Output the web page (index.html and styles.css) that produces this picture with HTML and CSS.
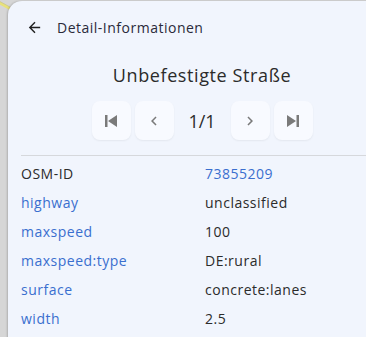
FILE: index.html
```html
<!DOCTYPE html>
<html lang="de">
<head>
<meta charset="utf-8">
<link rel="stylesheet" href="styles.css">
</head>
<body>
<div class="map">
  <svg class="road" width="30" height="40" viewBox="0 0 30 40"><path d="M-2 2 L20 14" stroke="#e8e27a" stroke-width="3" fill="none"/><path d="M-2 0.5 L20 12.5" stroke="#c9c590" stroke-width="0.8" fill="none"/></svg>
  <div class="panel">
    <div class="header">
      <svg class="back" width="17" height="17" viewBox="0 0 24 24"><path d="M20 11H7.83l5.59-5.59L12 4l-8 8 8 8 1.41-1.41L7.83 13H20v-2z" fill="#1f1f1f"/></svg>
      <span class="header-title">Detail-Informationen</span>
    </div>
    <h1 class="title">Unbefestigte Straße</h1>
    <div class="pager">
      <button class="pbtn"><svg width="24" height="24" viewBox="0 0 24 24"><path d="M6 6h2.5v12H6zm3 6l9 6V6z" fill="#7a7a7a"/></svg></button>
      <button class="pbtn"><svg width="18" height="18" viewBox="0 0 24 24"><path d="M15.41 7.41L14 6l-6 6 6 6 1.41-1.41L10.83 12z" fill="#7a7a7a"/></svg></button>
      <span class="pcount">1/1</span>
      <button class="pbtn"><svg width="18" height="18" viewBox="0 0 24 24"><path d="M10 6L8.59 7.41 13.17 12l-4.58 4.59L10 18l6-6z" fill="#7a7a7a"/></svg></button>
      <button class="pbtn"><svg width="24" height="24" viewBox="0 0 24 24"><path d="M6 18l9-6-9-6v12zM15.5 6v12H18V6h-2.5z" fill="#7a7a7a"/></svg></button>
    </div>
    <div class="table">
      <div class="row"><span class="key plain">OSM-ID</span><span class="val link">73855209</span></div>
      <div class="row"><span class="key">highway</span><span class="val">unclassified</span></div>
      <div class="row"><span class="key">maxspeed</span><span class="val">100</span></div>
      <div class="row"><span class="key">maxspeed:type</span><span class="val">DE:rural</span></div>
      <div class="row"><span class="key">surface</span><span class="val">concrete:lanes</span></div>
      <div class="row"><span class="key">width</span><span class="val">2.5</span></div>
    </div>
  </div>
</div>
</body>
</html>
```
FILE: styles.css
```css
html, body {
  margin: 0;
  padding: 0;
  overflow: hidden;
}
body {
  width: 366px;
  height: 337px;
  font-family: "Open Sans", "DejaVu Sans", sans-serif;
  color: #2b2b2b;
}
.map {
  position: relative;
  width: 366px;
  height: 337px;
  background: #d6d6d6;
  padding: 1px 0 0 8px;
  box-sizing: border-box;
  overflow: hidden;
}
.road {
  position: absolute;
  left: 0;
  top: 0;
}
.panel {
  position: relative;
  width: 388px;
  height: 360px;
  background: #f1f5fd;
  border-top-left-radius: 14px;
  box-shadow: -1px 0 2px rgba(0,0,0,0.18);
}
.header {
  display: flex;
  align-items: center;
  height: 52px;
  padding-left: 18px;
  gap: 14px;
}
.back { display: block; }
.header-title {
  font-size: 14px;
  letter-spacing: 0.5px;
  color: #2a2a3a;
}
.title {
  margin: 0;
  text-align: center;
  font-weight: 400;
  font-size: 18px;
  letter-spacing: 0.6px;
  line-height: 44px;
  color: #2b2b2b;
}
.pager {
  display: flex;
  justify-content: center;
  align-items: center;
  gap: 4px;
  margin-top: 4px;
}
.pbtn {
  width: 39px;
  height: 39px;
  border: none;
  border-radius: 8px;
  background: #f8faff;
  box-shadow: 0 1px 2px rgba(0,0,0,0.06);
  display: flex;
  align-items: center;
  justify-content: center;
  padding: 0;
}
.pcount {
  width: 49px;
  text-align: center;
  font-size: 18px;
  color: #2b2b2b;
}
.table {
  margin: 15px 0 0 13px;
  border-top: 1px solid #d6d8dc;
  padding-top: 3px;
}
.row {
  display: flex;
  height: 29px;
  align-items: center;
  font-size: 14px;
  letter-spacing: 0.5px;
}
.key {
  width: 184px;
  color: #3a6fcf;
}
.key.plain { color: #2b2b2b; }
.val { color: #2b2b2b; }
.val.link { color: #3a6fcf; }
```
